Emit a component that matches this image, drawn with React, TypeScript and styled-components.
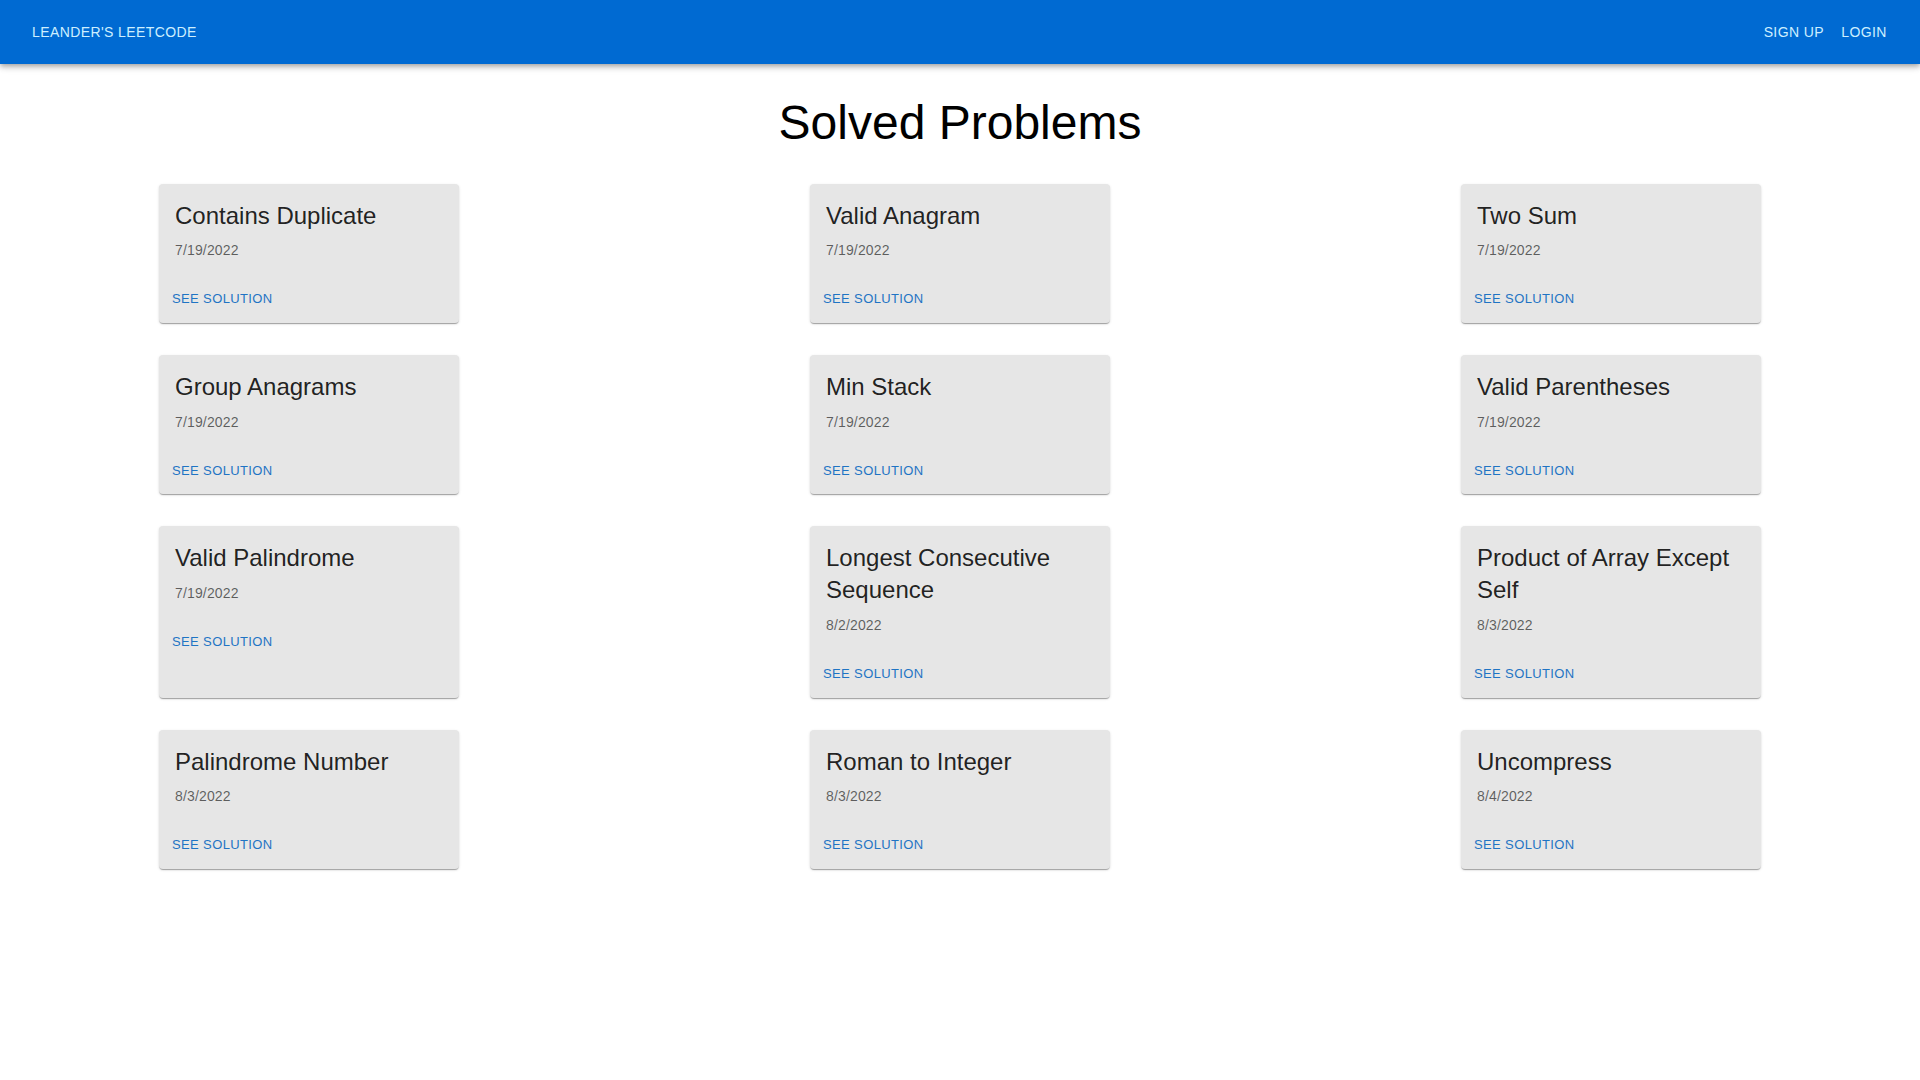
import React from "react";
import styled, { createGlobalStyle } from "styled-components";

const GlobalStyle = createGlobalStyle`
  html, body { margin: 0; padding: 0; background: #ffffff; }
  body { font-family: "Liberation Sans", Arial, sans-serif; }
  * { box-sizing: border-box; }
`;

const AppBar = styled.header`
  height: 64px;
  background: #006ad2;
  display: flex;
  align-items: center;
  justify-content: space-between;
  padding: 0 24px;
  box-shadow: 0px 2px 4px -1px rgba(0,0,0,0.2), 0px 4px 5px 0px rgba(0,0,0,0.14), 0px 1px 10px 0px rgba(0,0,0,0.12);
  position: relative;
  z-index: 1;
`;

const NavGroup = styled.nav`
  display: flex;
  align-items: center;
`;

const NavButton = styled.button`
  background: transparent;
  border: 0;
  min-width: 64px;
  padding: 6px 8px;
  font-family: "Liberation Sans", Arial, sans-serif;
  font-size: 14px;
  font-weight: 400;
  line-height: 1.75;
  letter-spacing: 0.02857em;
  text-transform: uppercase;
  color: #cdefff;
  cursor: pointer;
`;

const Main = styled.main`
  padding: 0 159px 40px;
`;

const PageTitle = styled.h1`
  margin: 0;
  padding: 31px 0 33px;
  text-align: center;
  font-size: 48px;
  font-weight: 400;
  line-height: 1.167;
  color: #000000;
`;

const Grid = styled.div`
  display: grid;
  grid-template-columns: repeat(3, 300px);
  justify-content: space-between;
  row-gap: 32px;
  align-items: stretch;
`;

const Card = styled.article`
  width: 300px;
  background: #e6e6e6;
  border-radius: 4px;
  box-shadow: 0px 2px 1px -1px rgba(0,0,0,0.2), 0px 1px 1px 0px rgba(0,0,0,0.14), 0px 1px 3px 0px rgba(0,0,0,0.12);
  display: flex;
  flex-direction: column;
`;

const CardContent = styled.div`
  padding: 16px;
`;

const CardTitle = styled.h2`
  margin: 0 0 8.4px;
  font-size: 24px;
  font-weight: 400;
  line-height: 1.334;
  color: rgba(0,0,0,0.87);
`;

const CardDate = styled.p`
  margin: 0;
  font-size: 14px;
  line-height: 1.43;
  letter-spacing: 0.01071em;
  color: rgba(0,0,0,0.6);
`;

const CardActions = styled.div`
  display: flex;
  align-items: center;
  padding: 8px;
`;

const ActionButton = styled.button`
  background: transparent;
  border: 0;
  padding: 4px 5px;
  font-family: "Liberation Sans", Arial, sans-serif;
  font-size: 13px;
  font-weight: 400;
  line-height: 1.75;
  letter-spacing: 0.02857em;
  text-transform: uppercase;
  color: #1f74c4;
  border-radius: 4px;
  cursor: pointer;
`;

const problems = [
  { title: "Contains Duplicate", date: "7/19/2022" },
  { title: "Valid Anagram", date: "7/19/2022" },
  { title: "Two Sum", date: "7/19/2022" },
  { title: "Group Anagrams", date: "7/19/2022" },
  { title: "Min Stack", date: "7/19/2022" },
  { title: "Valid Parentheses", date: "7/19/2022" },
  { title: "Valid Palindrome", date: "7/19/2022" },
  { title: "Longest Consecutive Sequence", date: "8/2/2022" },
  { title: "Product of Array Except Self", date: "8/3/2022" },
  { title: "Palindrome Number", date: "8/3/2022" },
  { title: "Roman to Integer", date: "8/3/2022" },
  { title: "Uncompress", date: "8/4/2022" },
];

export default function App() {
  return (
    <>
      <GlobalStyle />
      <AppBar>
        <NavButton>Leander's Leetcode</NavButton>
        <NavGroup>
          <NavButton>Sign Up</NavButton>
          <NavButton>Login</NavButton>
        </NavGroup>
      </AppBar>
      <Main>
        <PageTitle>Solved Problems</PageTitle>
        <Grid>
          {problems.map((p) => (
            <Card key={p.title}>
              <CardContent>
                <CardTitle>{p.title}</CardTitle>
                <CardDate>{p.date}</CardDate>
              </CardContent>
              <CardActions>
                <ActionButton>See Solution</ActionButton>
              </CardActions>
            </Card>
          ))}
        </Grid>
      </Main>
    </>
  );
}
